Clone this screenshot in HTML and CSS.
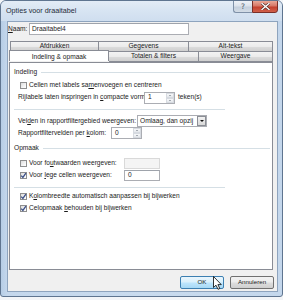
FILE: index.html
```html
<!DOCTYPE html>
<html>
<head>
<meta charset="utf-8">
<title>Opties voor draaitabel</title>
<link rel="stylesheet" href="styles.css">
</head>
<body>
<div class="window">
  <div class="titlebar">
    <span class="title">Opties voor draaitabel</span>
    <div class="caption-btns">
      <div class="cbtn help">?</div>
      <div class="cbtn close">
        <svg width="9" height="7" viewBox="0 0 9 7"><path d="M1 0.5 L8 6.5 M8 0.5 L1 6.5" stroke="#4a2a26" stroke-width="2.6" stroke-linecap="square"/><path d="M1 0.5 L8 6.5 M8 0.5 L1 6.5" stroke="#ffffff" stroke-width="1.4" stroke-linecap="square"/></svg>
      </div>
    </div>
  </div>
  <div class="frame-body">
    <div class="client">
      <div class="name-row">
        <span class="name-label"><u>N</u>aam:</span>
        <div class="textbox name-input">Draaitabel4</div>
      </div>
      <div class="tabs">
        <div class="tab-row back">
          <div class="tab t1">Afdrukken</div>
          <div class="tab t2">Gegevens</div>
          <div class="tab t3">Alt-tekst</div>
        </div>
        <div class="tab-row front">
          <div class="tab selected">Indeling &amp; opmaak</div>
          <div class="tab t2">Totalen &amp; filters</div>
          <div class="tab t5">Weergave</div>
        </div>
      </div>
      <div class="panel">
        <div class="group-head h1"><span>Indeling</span><div class="group-line"></div></div>
        <div class="row cb-row r-a">
          <span class="checkbox"></span>
          <span>Cellen met labels sa<u>m</u>envoegen en centreren</span>
        </div>
        <div class="row plain r-b">
          <span class="lbl w126">Rijlabels laten inspringen in <u>c</u>ompacte vorm:</span>
          <div class="spin w31"><span class="val">1</span><div class="spin-btns"><span class="up"></span><span class="down"></span></div></div>
          <span class="after">teken(s)</span>
        </div>
        <div class="separator"></div>
        <div class="row plain r-c">
          <span class="lbl w119">Vel<u>d</u>en in rapportfiltergebied weergeven:</span>
          <div class="combo"><span class="val">Omlaag, dan opzij</span><div class="combo-btn"><span class="tri"></span></div></div>
        </div>
        <div class="row plain r-c">
          <span class="lbl w93">Rapportfiltervelden per <u>k</u>olom:</span>
          <div class="spin w31"><span class="val">0</span><div class="spin-btns"><span class="up"></span><span class="down"></span></div></div>
        </div>
        <div class="group-head h2"><span>Opmaak</span><div class="group-line"></div></div>
        <div class="row cb-row r-d">
          <span class="checkbox"></span>
          <span class="lbl w95">Voor fo<u>u</u>twaarden weergeven:</span>
          <div class="textbox small disabled"></div>
        </div>
        <div class="row cb-row r-c">
          <span class="checkbox checked"><svg width="7" height="7" viewBox="0 0 7 7"><path d="M1.2 3.6 L2.9 5.4 L5.9 1.2" fill="none" stroke="#3b4f87" stroke-width="1.3"/></svg></span>
          <span class="lbl w95">Voor <u>l</u>ege cellen weergeven:</span>
          <div class="textbox small"><span class="val">0</span></div>
        </div>
        <div class="separator s2"></div>
        <div class="row cb-row r-c">
          <span class="checkbox checked"><svg width="7" height="7" viewBox="0 0 7 7"><path d="M1.2 3.6 L2.9 5.4 L5.9 1.2" fill="none" stroke="#3b4f87" stroke-width="1.3"/></svg></span>
          <span>K<u>o</u>lombreedte automatisch aanpassen bij bijwerken</span>
        </div>
        <div class="row cb-row r-c">
          <span class="checkbox checked"><svg width="7" height="7" viewBox="0 0 7 7"><path d="M1.2 3.6 L2.9 5.4 L5.9 1.2" fill="none" stroke="#3b4f87" stroke-width="1.3"/></svg></span>
          <span>Celopmaak <u>b</u>ehouden bij bijwerken</span>
        </div>
      </div>
      <div class="buttons">
        <div class="btn default">OK</div>
        <div class="btn">Annuleren</div>
      </div>
    </div>
  </div>
</div>
<svg class="cursor" width="11" height="14" viewBox="0 0 11 14"><path d="M0.5 0.5 L0.5 11.5 L3 9.2 L5 13.3 L6.8 12.5 L4.9 8.6 L8.3 8.6 Z" fill="#ffffff" stroke="#000000" stroke-width="0.8" stroke-linejoin="round"/></svg>
</body>
</html>
```

FILE: styles.css
```css
html, body {
  margin: 0;
  padding: 0;
}
body {
  width: 283px;
  height: 300px;
  background: #f3f5f8;
  font-family: "Liberation Sans", Arial, sans-serif;
  font-size: 6.6px;
  line-height: 1;
  color: #1b1b1b;
  position: relative;
  overflow: hidden;
  white-space: nowrap;
}
u { text-decoration-thickness: 0.5px; text-underline-offset: 1px; }

.window {
  width: 283px;
  height: 297px;
  box-sizing: border-box;
  border: 1px solid #5f7590;
  border-radius: 6px 6px 3px 3px;
  background: linear-gradient(90deg, #b6cde6 0px, #c4d7ec 6px, #c9dbee 50%, #c4d7ec 100%);
  display: flex;
  flex-direction: column;
  overflow: hidden;
}
.titlebar {
  height: 20px;
  flex: none;
  display: flex;
  align-items: flex-start;
  padding: 0 4px 0 5px;
  background: linear-gradient(180deg, #e3ecf6 0px, #d7e4f2 10px, #cfdeef 20px);
}
.title {
  font-size: 7.2px;
  color: #1f2c3a;
  margin-top: 6px;
  flex: 1;
}
.caption-btns {
  display: flex;
  margin-top: -1px;
}
.cbtn {
  height: 13px;
  box-sizing: border-box;
  display: flex;
  align-items: center;
  justify-content: center;
}
.help {
  width: 19px;
  border: 1px solid #7f91a8;
  border-right: none;
  border-radius: 0 0 0 3px;
  background: linear-gradient(180deg, #eef2f7 0%, #dce3ec 45%, #c5d0dd 55%, #d3dce6 100%);
  color: #4c5866;
  font-size: 7.5px;
  font-family: "DejaVu Sans", sans-serif;
}
.close {
  width: 26px;
  border: 1px solid #7a2f28;
  border-radius: 0 0 3px 0;
  background: linear-gradient(180deg, #e9a898 0%, #d67766 45%, #c4402e 55%, #d0604a 100%);
}

.frame-body {
  flex: 1;
  display: flex;
  padding: 0 4px 4px 6px;
}
.client {
  flex: 1;
  background: #f0f0f0;
  border: 1px solid #8ea4be;
  display: flex;
  flex-direction: column;
}

.name-row {
  display: flex;
  align-items: center;
  margin-top: 1px;
  height: 12px;
}
.name-label {
  width: 21px;
}
.textbox {
  box-sizing: border-box;
  background: #ffffff;
  border: 1px solid #abadb3;
  border-top-color: #9ea3ab;
  display: flex;
  align-items: center;
}
.name-input {
  width: 160px;
  height: 12px;
  padding-left: 2px;
}

.tabs {
  margin-top: 6px;
  display: flex;
  flex-direction: column;
}
.tab-row {
  display: flex;
}
.tab-row.back {
  height: 10px;
  margin-left: 2px;
}
.tab-row.front {
  height: 11px;
  margin-left: 1px;
}
.tab {
  box-sizing: border-box;
  border: 1px solid #898c95;
  border-left: none;
  background: linear-gradient(180deg, #f3f3f3 0%, #ebebeb 50%, #dddddd 51%, #cfcfcf 100%);
  display: flex;
  align-items: center;
  justify-content: center;
}
.tab-row.back .tab { border-bottom: none; height: 10px; }
.tab-row .tab:first-child { border-left: 1px solid #898c95; }
.t1 { width: 89px; }
.t2 { width: 90px; }
.t3 { width: 84px; }
.t5 { width: 74px; }
.tab-row.front .tab { height: 11px; }
.tab.selected {
  width: 100px;
  height: 13px;
  margin-top: -1px;
  margin-bottom: -1px;
  background: #ffffff;
  border: 1px solid #898c95;
  border-bottom: none;
  position: relative;
  z-index: 2;
  align-items: flex-start;
  padding-top: 3px;
}

.panel {
  margin-left: 1px;
  width: 264px;
  height: 208px;
  box-sizing: border-box;
  background: #ffffff;
  border: 1px solid #898c95;
  display: flex;
  flex-direction: column;
  padding-top: 3px;
}
.group-head {
  display: flex;
  align-items: center;
  padding-left: 4px;
  padding-right: 2px;
  gap: 4px;
}
.group-head.h1 { height: 13px; }
.group-head.h2 { height: 12px; margin-top: 3px; }
.group-line {
  flex: 1;
  height: 1px;
  background: #d5dfe5;
}
.row {
  display: flex;
  align-items: center;
  height: 12px;
}
.r-b { height: 13px; }
.r-d { margin-top: 3px; }
.cb-row { padding-left: 10px; }
.plain { padding-left: 8px; }
.checkbox {
  width: 7px;
  height: 7px;
  box-sizing: border-box;
  border: 1px solid #8f8f8f;
  background: linear-gradient(135deg, #dcdcdc 0%, #f4f4f4 60%, #ffffff 100%);
  margin-right: 2px;
  flex: none;
  display: flex;
  align-items: center;
  justify-content: center;
  overflow: visible;
}
.checkbox svg { flex: none; }
.lbl { flex: none; }
.w126 { width: 126px; }
.w119 { width: 119px; }
.w93 { width: 93px; }
.w95 { width: 95px; }

.spin {
  height: 12px;
  box-sizing: border-box;
  border: 1px solid #abadb3;
  background: #ffffff;
  display: flex;
  align-items: center;
  justify-content: space-between;
  flex: none;
}
.w31 { width: 31px; }
.val { padding-left: 3px; }
.spin-btns {
  width: 8px;
  height: 10px;
  display: flex;
  flex-direction: column;
}
.spin-btns span {
  flex: 1;
  box-sizing: border-box;
  border: 1px solid #d6dae0;
  background: linear-gradient(180deg, #f7f8fa, #e4e7eb);
  display: flex;
  align-items: center;
  justify-content: center;
}
.spin-btns .up::after {
  content: "";
  border-left: 1.5px solid transparent;
  border-right: 1.5px solid transparent;
  border-bottom: 1.5px solid #5a6470;
}
.spin-btns .down::after {
  content: "";
  border-left: 1.5px solid transparent;
  border-right: 1.5px solid transparent;
  border-top: 1.5px solid #5a6470;
}
.after { margin-left: 3px; }

.separator {
  height: 1px;
  width: 211px;
  margin: 5px 0 5px 4px;
  background: #d5dfe5;
  flex: none;
}
.separator.s2 { margin: 6px 0 2px 4px; }

.combo {
  width: 70px;
  height: 12px;
  box-sizing: border-box;
  border: 1px solid #abadb3;
  background: #ffffff;
  display: flex;
  align-items: center;
  justify-content: space-between;
  flex: none;
}
.combo .val { padding-left: 2px; }
.combo-btn {
  width: 9px;
  height: 10px;
  box-sizing: border-box;
  border: 1px solid #8b8e95;
  background: linear-gradient(180deg, #f2f2f2, #d8d8d8);
  display: flex;
  align-items: center;
  justify-content: center;
}
.tri {
  border-left: 2px solid transparent;
  border-right: 2px solid transparent;
  border-top: 2px solid #111111;
}

.textbox.small {
  width: 36px;
  height: 11px;
  flex: none;
}
.textbox.small .val { padding-left: 3px; }
.textbox.disabled {
  background: #f4f4f4;
  border-color: #d9d9d9;
}

.buttons {
  display: flex;
  justify-content: flex-end;
  gap: 6px;
  margin-top: 6px;
  margin-right: 3px;
}
.btn {
  width: 44px;
  height: 13px;
  box-sizing: border-box;
  border: 1px solid #707070;
  border-radius: 2px;
  background: linear-gradient(180deg, #f2f2f2 0%, #ebebeb 48%, #dddddd 52%, #cfcfcf 100%);
  display: flex;
  align-items: center;
  justify-content: center;
  font-size: 6.2px;
}
.btn.default {
  border-color: #3c7fb1;
  background: linear-gradient(180deg, #eaf6fd 0%, #d9f0fc 48%, #bee6fd 52%, #a7d9f5 100%);
}

.cursor {
  position: absolute;
  left: 213px;
  top: 276px;
}
```
